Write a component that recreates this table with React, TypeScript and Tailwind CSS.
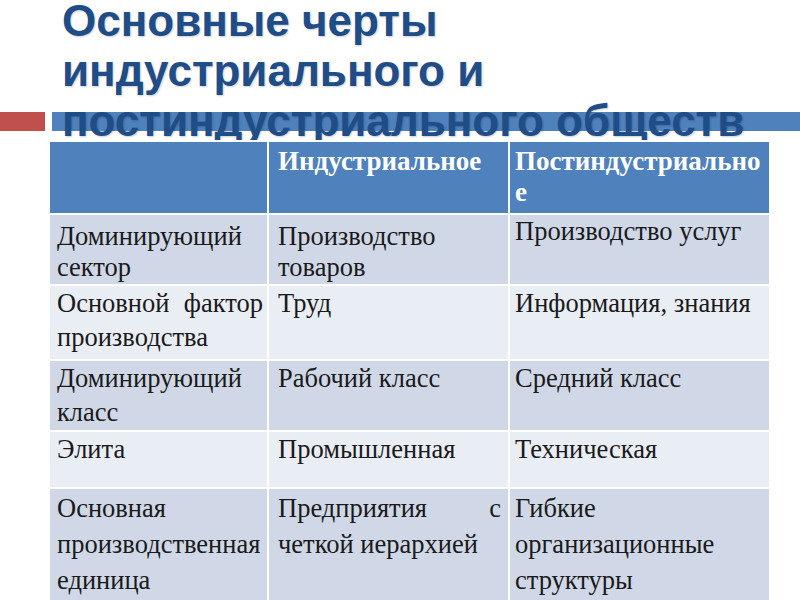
const rows: { cells: string[]; bg: string; h: string }[] = [
  {
    cells: ["Доминирующий сектор", "Производство товаров", "Производство услуг"],
    bg: "bg-[#d0d8e8]",
    h: "h-[71px]",
  },
  {
    cells: ["Основной фактор производства", "Труд", "Информация, знания"],
    bg: "bg-[#e9edf4]",
    h: "h-[75px]",
  },
  {
    cells: ["Доминирующий класс", "Рабочий класс", "Средний класс"],
    bg: "bg-[#d0d8e8]",
    h: "h-[71px]",
  },
  {
    cells: ["Элита", "Промышленная", "Техническая"],
    bg: "bg-[#e9edf4]",
    h: "h-[57px]",
  },
  {
    cells: [
      "Основная производственная единица",
      "Предприятия с четкой иерархией",
      "Гибкие организационные структуры",
    ],
    bg: "bg-[#d0d8e8]",
    h: "h-[116px]",
  },
]

export default function App() {
  return (
    <div className="relative w-[800px] h-[600px] overflow-hidden bg-white">
      {/* decorative bars behind the last title line */}
      <div className="absolute left-0 top-[112px] w-[45px] h-[19px] bg-[#c0504d]" />
      <div className="absolute left-[52px] top-[112px] right-0 h-[19px] bg-[#4f81bd]" />

      <h1 className="relative pl-[62px] -mt-[4px] font-['Liberation_Sans',Arial,sans-serif] font-bold text-[44px] leading-[50px] text-[#1f4d87] [text-shadow:1px_1px_2px_rgba(0,0,0,0.2)]">
        Основные черты
        <br />
        индустриального и
        <br />
        постиндустриального обществ
      </h1>

      <table className="relative ml-[48px] -mt-[6px] w-[721px] table-fixed border-collapse font-['Liberation_Serif','Times_New_Roman',serif] text-[26.5px] text-[#1a1a1a]">
        <colgroup>
          <col className="w-[219px]" />
          <col className="w-[241px]" />
          <col className="w-[261px]" />
        </colgroup>
        <thead>
          <tr className="h-[73px] bg-[#4f81bd] text-white">
            <th className="border-2 border-white" />
            <th className="border-2 border-white align-top text-left font-bold text-[27px] leading-[31px] pl-[9px] pt-[4px]">
              Индустриальное
            </th>
            <th className="border-2 border-white align-top text-left font-bold text-[27px] leading-[31px] pl-[5px] pt-[4px]">
              Постиндустриально
              <br />е
            </th>
          </tr>
        </thead>
        <tbody>
          {rows.map((r, i) => (
            <tr key={i} className={`${r.h} ${r.bg}`}>
              {r.cells.map((c, j) => (
                <td
                  key={j}
                  className={`border-2 border-white align-top text-justify ${
                    i === 0 ? "leading-[31px]" : i === 4 ? "leading-[36px]" : "leading-[34px]"
                  } ${i === 0 && j === 2 ? "pt-[1px]" : i === 0 ? "pt-[6px]" : i === 4 ? "pt-[1px]" : "pt-0"} ${
                    j === 0 ? "pl-[7px] pr-[4px]" : j === 1 ? "pl-[9px] pr-[7px]" : "pl-[5px] pr-[6px]"
                  }`}
                >
                  {c}
                </td>
              ))}
            </tr>
          ))}
        </tbody>
      </table>
    </div>
  )
}
